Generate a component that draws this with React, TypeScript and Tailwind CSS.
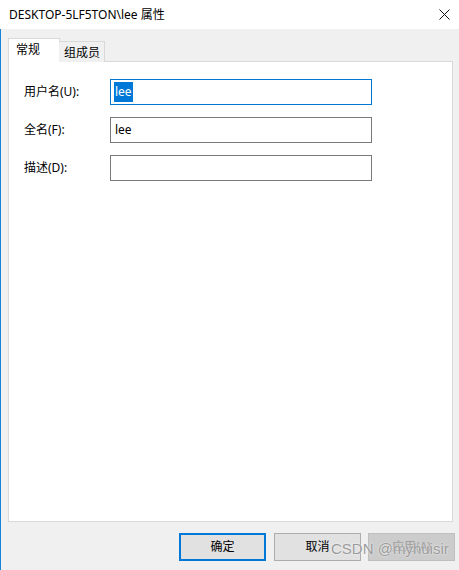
const FONT = "font-['Segoe_UI','Noto_Sans','Noto_Sans_CJK_SC',sans-serif]";

const FIELDS = [
  { label: "用户名(U):", value: "lee", focused: true },
  { label: "全名(F):", value: "lee", focused: false },
  { label: "描述(D):", value: "", focused: false },
];

function Field({ label, value, focused }: { label: string; value: string; focused: boolean }) {
  return (
    <div className="flex items-center h-[26px]">
      <span className="w-[86px] text-[12px] text-black">{label}</span>
      <div
        className={
          "w-[262px] h-[26px] border flex items-center pl-[3px] text-[12px] text-black " +
          (focused ? "border-[#0078d7]" : "border-[#7a7a7a]")
        }
      >
        {value &&
          (focused ? (
            <span className="bg-[#0078d7] text-white h-[20px] leading-[20px] px-[1px]">{value}</span>
          ) : (
            <span className="px-[1px]">{value}</span>
          ))}
      </div>
    </div>
  );
}

export default function App() {
  return (
    <div className={`w-[459px] h-[570px] bg-[#f0f0f0] flex flex-col relative overflow-hidden ${FONT}`}>
      {/* title bar */}
      <div className="h-[29px] bg-white flex items-center justify-between pl-[9px] pr-[9px] shrink-0">
        <span className="text-[12px] text-black">DESKTOP-5LF5TON\lee 属性</span>
        <svg width="11" height="11" viewBox="0 0 11 11">
          <path d="M0.5 0.5L10.5 10.5M10.5 0.5L0.5 10.5" stroke="#111" strokeWidth="1" />
        </svg>
      </div>

      <div className="flex-1 border-l border-[#1883d7] pl-[7px] pr-[6px] pt-[9px] flex flex-col">
        {/* tabs */}
        <div className="flex items-end h-[24px] relative z-10">
          <div className="w-[52px] h-[24px] bg-white border border-[#d9d9d9] border-b-0 pl-[7px] pt-[2px] text-[12px] text-black">
            常规
          </div>
          <div className="w-[46px] h-[21px] -ml-[1px] bg-[#f0f0f0] border border-[#d9d9d9] border-l-0 border-b-0 pl-[5px] text-[12px] text-black leading-[21px]">
            组成员
          </div>
        </div>
        {/* panel */}
        <div className="h-[461px] -mt-[1px] bg-white border border-[#d9d9d9] pl-[15px] pt-[17px] flex flex-col gap-[12px]">
          {FIELDS.map((f) => (
            <Field key={f.label} {...f} />
          ))}
        </div>
        {/* buttons */}
        <div className="flex justify-end mt-[11px] -mr-[2px]">
          <button className="w-[87px] h-[28px] bg-[#e1e1e1] border-2 border-[#0078d7] text-[12px] text-black">
            确定
          </button>
          <button className="w-[87px] h-[28px] ml-[8px] bg-[#e1e1e1] border border-[#adadad] text-[12px] text-black">
            取消
          </button>
          <button className="w-[87px] h-[28px] ml-[7px] bg-[#cccccc] border border-[#bfbfbf] text-[12px] text-[#a0a0a0]">
            应用(A)
          </button>
        </div>
      </div>

      {/* watermark */}
      <span className="absolute left-[331px] top-[538px] text-[15px] text-[#9b9b9b] font-['Liberation_Sans',sans-serif] [text-shadow:0_0_2px_#ffffff]">
        CSDN @myhuisir
      </span>
    </div>
  );
}
